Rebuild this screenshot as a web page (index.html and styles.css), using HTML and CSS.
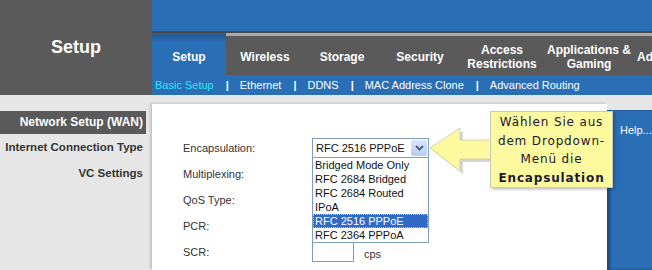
FILE: index.html
```html
<!DOCTYPE html>
<html lang="de">
<head>
    <meta charset="UTF-8">
    <title>Setup</title>
    <link rel="stylesheet" href="styles.css">
</head>
<body>
    <!-- Kopfbereich -->
    <header class="top">
        <div class="brand">Setup</div>
        <div class="nav">
            <div class="band"></div>
            <ul class="tabs">
                <li class="tab active t-setup">Setup</li>
                <li class="tab t-wireless">Wireless</li>
                <li class="tab t-storage">Storage</li>
                <li class="tab t-security">Security</li>
                <li class="tab t-access">Access<br>Restrictions</li>
                <li class="tab t-apps">Applications &amp;<br>Gaming</li>
                <li class="tab t-admin">Administration</li>
            </ul>
            <div class="subnav">
                <a class="current">Basic Setup</a><span class="sep">|</span>
                <a>Ethernet</a><span class="sep">|</span>
                <a>DDNS</a><span class="sep">|</span>
                <a>MAC Address Clone</a><span class="sep">|</span>
                <a>Advanced Routing</a>
            </div>
        </div>
    </header>

    <!-- Inhalt -->
    <div class="main">
        <aside class="side">
            <div class="side-title">Network Setup (WAN)</div>
            <div class="side-item">Internet Connection Type</div>
            <div class="side-item">VC Settings</div>
        </aside>

        <section class="content">
            <div class="form">
                <div class="label">Encapsulation:</div>
                <div class="field">
                    <div class="select-wrap">
                        <div class="select">
                            <span>RFC 2516 PPPoE</span>
                            <span class="select-btn">
                                <svg width="9" height="6" viewBox="0 0 9 6"><path d="M1 1 L4.5 4.5 L8 1" fill="none" stroke="#4d6185" stroke-width="2"/></svg>
                            </span>
                        </div>
                        <ul class="options">
                            <li>Bridged Mode Only</li>
                            <li>RFC 2684 Bridged</li>
                            <li>RFC 2684 Routed</li>
                            <li>IPoA</li>
                            <li class="picked">RFC 2516 PPPoE</li>
                            <li>RFC 2364 PPPoA</li>
                        </ul>
                    </div>
                </div>
                <div class="label">Multiplexing:</div>
                <div class="field"></div>
                <div class="label">QoS Type:</div>
                <div class="field"></div>
                <div class="label">PCR:</div>
                <div class="field"></div>
                <div class="label">SCR:</div>
                <div class="field"><span class="input"></span><span class="unit">cps</span></div>
            </div>
        </section>

        <aside class="help">Help...</aside>

        <!-- Hinweis -->
        <svg class="arrow" width="66" height="50" viewBox="0 0 66 50">
            <path d="M5 25 L35 5 L35 17 L66 17 L66 36 L35 36 L35 48 Z" fill="#b9b9b9" opacity="0.6"/>
            <path d="M2 22 L32 2 L32 14 L63 14 L63 33 L32 33 L32 45 Z" fill="#fdf99e" stroke="#c9c9b0" stroke-width="0.8"/>
        </svg>
        <div class="callout">
            Wählen Sie aus<br>dem Dropdown-<br>Menü die<br><b>Encapsulation</b>
        </div>
    </div>
</body>
</html>
```

FILE: styles.css
```css
/* Grundlayout */
body {
    margin: 0;
    width: 652px;
    height: 270px;
    overflow: hidden;
    font-family: "Liberation Sans", Arial, sans-serif;
    background: #e6e6e6;
}

.top {
    display: flex;
    height: 95px;
}
.brand {
    width: 152px;
    background: #5a5a5a;
    color: white;
    font-weight: bold;
    font-size: 18px;
    text-align: center;
    line-height: 95px;
}
.nav {
    flex: 1;
    display: flex;
    flex-direction: column;
    overflow: hidden;
}
.band {
    height: 31px;
    background: #2a6eb5;
}
.tabs {
    list-style: none;
    margin: 0;
    padding: 0;
    height: 44px;
    display: flex;
    background: #4a4a4a;
}
.tab {
    flex: none;
    box-sizing: border-box;
    margin-top: 2px;
    padding-top: 3px;
    border-top: 3px solid #a9a9b0;
    background: #5a5a5a;
    color: white;
    font-weight: bold;
    font-size: 12px;
    line-height: 14px;
    display: flex;
    align-items: center;
    justify-content: center;
    text-align: center;
    white-space: nowrap;
}
.tab.active {
    background: linear-gradient(#225a96, #2a6eb5 6px);
    border-top: 3px solid #2a5d94;
}
.t-setup { width: 74px; }
.t-wireless { width: 78px; }
.t-storage { width: 76px; }
.t-security { width: 80px; }
.t-access { width: 84px; }
.t-apps { width: 90px; }
.t-admin { width: 84px; justify-content: flex-start; padding-left: 3px; }

.subnav {
    height: 20px;
    background: #2a6eb5;
    display: flex;
    align-items: center;
    padding-left: 3px;
    font-size: 11px;
    color: white;
}
.subnav a {
    white-space: nowrap;
}
.subnav a.current {
    color: #2ee6f8;
}
.sep {
    font-weight: bold;
    margin: 0 11px 0 12px;
}

/* Hauptbereich */
.main {
    position: relative;
    display: flex;
    height: 175px;
}
.side {
    width: 146px;
    margin-right: 6px;
    padding-top: 16px;
}
.side-title {
    height: 23px;
    line-height: 23px;
    background: #5a5a5a;
    color: white;
    font-weight: bold;
    font-size: 12px;
    text-align: right;
    padding-right: 3px;
}
.side-item {
    height: 26px;
    line-height: 26px;
    font-weight: bold;
    font-size: 11.5px;
    color: #333;
    text-align: right;
    padding-right: 3px;
    white-space: nowrap;
}
.content {
    flex: 1;
    margin-top: 9px;
    background: white;
    box-shadow: -2px -1px 2px rgba(0, 0, 0, 0.15);
    padding: 31px 0 0 31px;
}
.help {
    width: 45px;
    margin-top: 15px;
    background: #2a6eb5;
    box-shadow: inset 3px 0 3px rgba(0, 0, 0, 0.35);
    color: white;
    font-size: 11px;
    padding: 14px 0 0 13px;
    box-sizing: border-box;
    white-space: nowrap;
    overflow: hidden;
}

/* Formular */
.form {
    display: grid;
    grid-template-columns: 129px auto;
    grid-auto-rows: 26px;
    align-items: center;
}
.label {
    font-size: 11px;
    color: #333;
}
.field {
    display: flex;
    align-items: center;
    font-size: 11px;
}
.select-wrap {
    position: relative;
}
.select {
    box-sizing: border-box;
    width: 117px;
    height: 20px;
    border: 1px solid #7f9db9;
    display: flex;
    align-items: center;
    justify-content: space-between;
    padding: 0 1px 0 3px;
    font-size: 11px;
    color: #111;
}
.select-btn {
    width: 16px;
    height: 16px;
    background: linear-gradient(#dbe6fc, #b7cbf4);
    border-radius: 2px;
    display: flex;
    align-items: center;
    justify-content: center;
}
.options {
    position: absolute;
    top: 19px;
    left: 0;
    width: 117px;
    box-sizing: border-box;
    margin: 0;
    padding: 0;
    list-style: none;
    background: white;
    border: 1px solid #7f9db9;
    font-size: 11px;
    color: #111;
}
.options li {
    height: 14px;
    line-height: 14px;
    padding-left: 2px;
}
.options li.picked {
    background: #316ac5;
    color: white;
    outline: 1px dotted #f0c060;
    outline-offset: -1px;
}
.input {
    box-sizing: border-box;
    width: 42px;
    height: 20px;
    border: 1px solid #7f9db9;
}
.unit {
    margin: 4px 0 0 10px;
    color: #333;
}

/* Hinweisblase */
.arrow {
    position: absolute;
    left: 428px;
    top: 31px;
}
.callout {
    position: absolute;
    left: 490px;
    top: 16px;
    width: 123px;
    height: 77px;
    box-sizing: border-box;
    background: #fdf99e;
    border: 1px solid #c9c9b8;
    box-shadow: 2px 2px 2px rgba(0, 0, 0, 0.2);
    font-family: "DejaVu Sans", Verdana, sans-serif;
    font-size: 12px;
    letter-spacing: 0.85px;
    line-height: 18.5px;
    text-align: center;
    color: #1a1a30;
    padding-top: 1px;
}
```
